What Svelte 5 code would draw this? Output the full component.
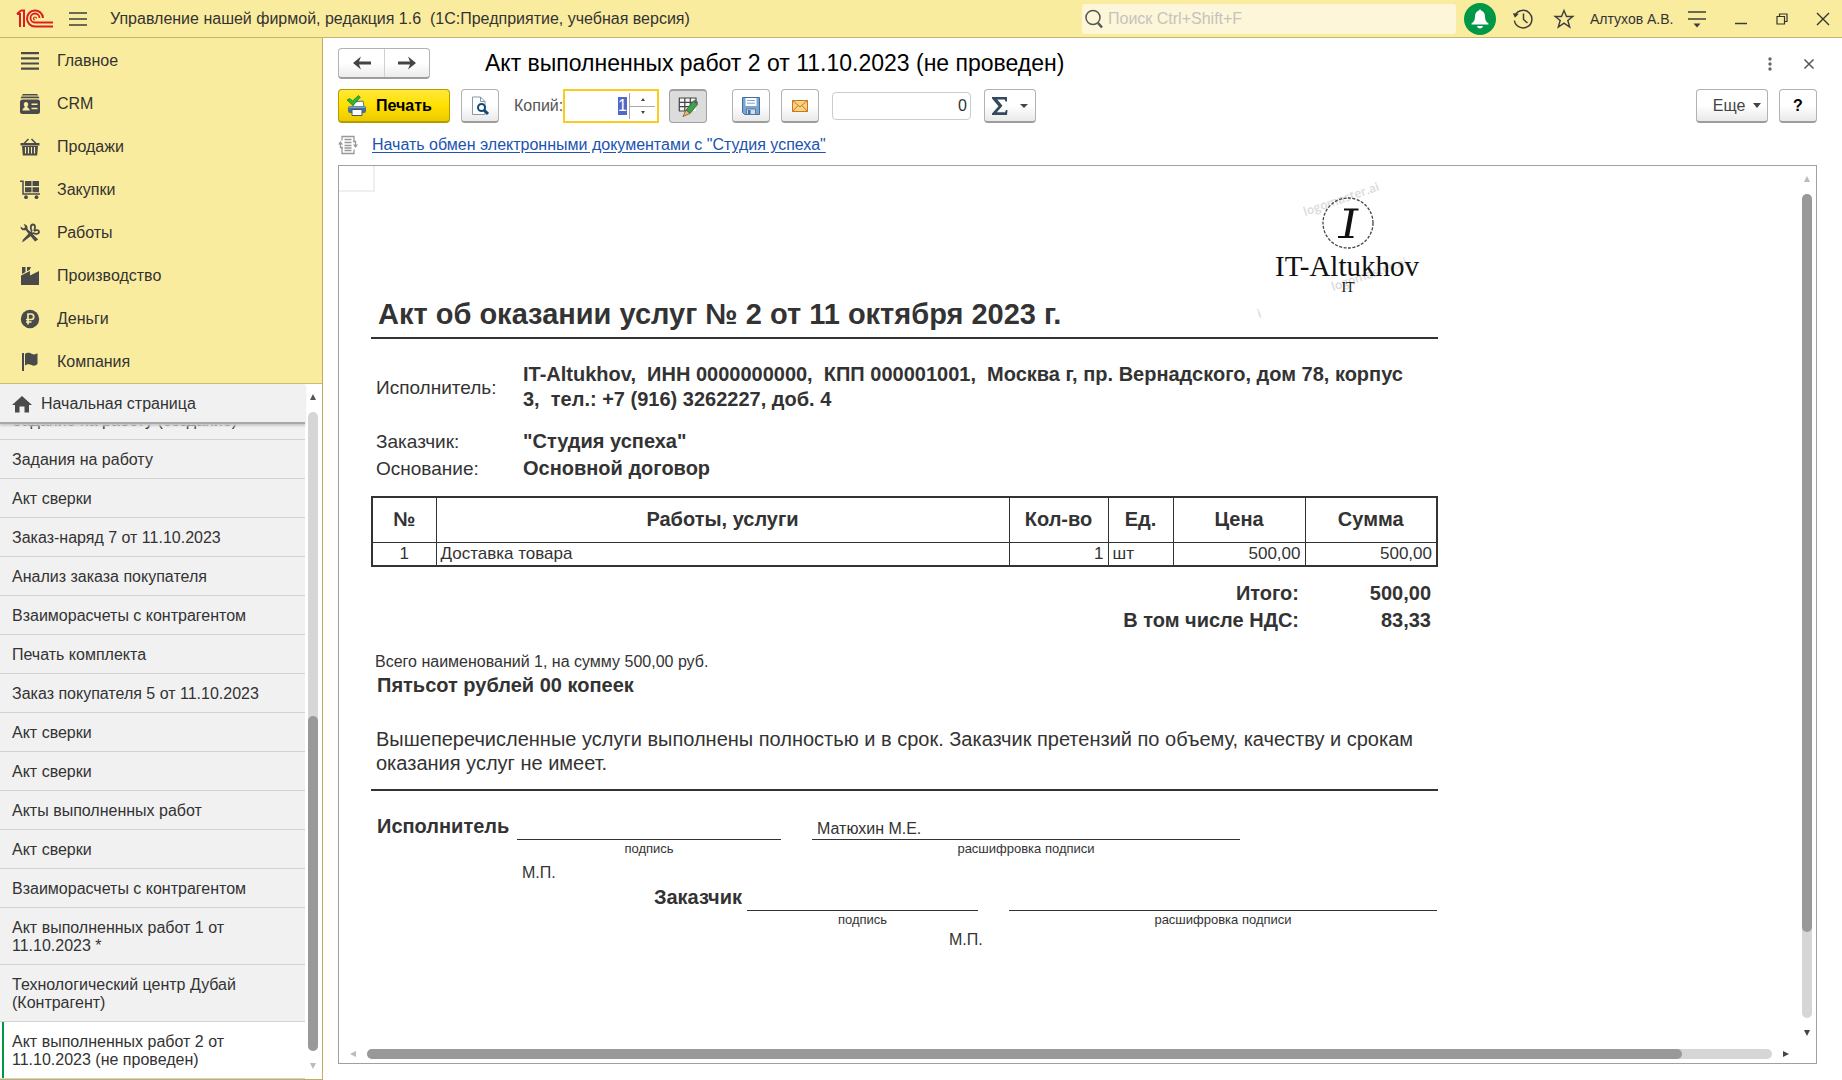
<script>
  import { onMount } from 'svelte';

  const sections = [
    { id: 'main', label: 'Главное' },
    { id: 'crm', label: 'CRM' },
    { id: 'sales', label: 'Продажи' },
    { id: 'purchases', label: 'Закупки' },
    { id: 'works', label: 'Работы' },
    { id: 'production', label: 'Производство' },
    { id: 'money', label: 'Деньги' },
    { id: 'company', label: 'Компания' }
  ];

  const tabs = [
    'Задание на работу (создание)',
    'Задания на работу',
    'Акт сверки',
    'Заказ-наряд 7 от 11.10.2023',
    'Анализ заказа покупателя',
    'Взаиморасчеты с контрагентом',
    'Печать комплекта',
    'Заказ покупателя 5 от 11.10.2023',
    'Акт сверки',
    'Акт сверки',
    'Акты выполненных работ',
    'Акт сверки',
    'Взаиморасчеты с контрагентом',
    'Акт выполненных работ 1 от 11.10.2023 *',
    'Технологический центр Дубай (Контрагент)',
    'Акт выполненных работ 2 от 11.10.2023 (не проведен)'
  ];

  let copies = $state('1');
  let cellSum = $state('0');
  let copiesInput;

  onMount(() => {
    copiesInput.focus({ preventScroll: true });
    copiesInput.select();
  });
</script>

<div class="app">
  <header class="topbar">
    <svg class="logo" viewBox="0 0 38 20" width="38" height="20" fill="none" stroke="#d9201f" stroke-width="2">
      <path d="M1 5h3v13M4 5h0M5 1.500h3v16.500M1 5l4-3.500" />
      <path d="M27 9a8 8 0 1 0-8 8.500h18" />
      <path d="M23.500 9a4.500 4.500 0 1 0-4.500 4.500h18" stroke-width="1.800" />
      <path d="M20.500 9.500a1.500 1.500 0 1 0-1.500 1.500" stroke-width="1.200" />
    </svg>
    <button class="plain menu" aria-label="Меню">
      <svg viewBox="0 0 20 16" width="20" height="16" stroke="#3c3c3c" stroke-width="1.500"><path d="M1 2h18M1 8h18M1 14h18" /></svg>
    </button>
    <span class="apptitle">Управление нашей фирмой, редакция 1.6&nbsp; (1С:Предприятие, учебная версия)</span>
    <label class="search">
      <svg viewBox="0 0 20 20" width="20" height="20" fill="none" stroke="#555"><circle cx="9" cy="8.500" r="7" stroke-width="1.500" /><path d="M14 14l4 4.500" stroke-width="2.500" /></svg>
      <input type="text" aria-label="Поиск" placeholder="Поиск Ctrl+Shift+F" />
    </label>
    <button class="bell" aria-label="Уведомления">
      <svg viewBox="0 0 20 20" width="20" height="20" fill="#fff"><path d="M10 0.500c.8 0 1.200.6 1.300 1.300 2.700.8 3.700 3 3.700 5.700 0 3.700 1.200 5.500 3.500 7v1h-17v-1c2.300-1.500 3.500-3.300 3.500-7 0-2.700 1-4.900 3.700-5.700.1-.7.5-1.300 1.300-1.300zM7 17h6c-.3 1.600-1.500 2.500-3 2.500s-2.700-.9-3-2.500z" /></svg>
    </button>
    <button class="plain hist" aria-label="История">
      <svg viewBox="0 0 22 22" width="22" height="22" fill="none" stroke="#3c3c3c" stroke-width="1.500"><path d="M3.300 7a8.800 8.800 0 1 1-.9 5.500M11.500 5.500v6l4 3.500" /><path d="M.8 5.200l6 .6-3.800 4z" fill="#3c3c3c" stroke="none" /></svg>
    </button>
    <button class="plain star" aria-label="Избранное">
      <svg viewBox="0 0 20 20" width="20" height="20" fill="none" stroke="#3c3c3c" stroke-width="1.400"><path d="M10 1.500l2.500 6h6.300l-5 4 1.900 6.500-5.700-3.900-5.700 3.900 1.900-6.500-5-4h6.300z" /></svg>
    </button>
    <span class="user">Алтухов А.В.</span>
    <button class="plain settings" aria-label="Настройки">
      <svg viewBox="0 0 18 18" width="18" height="18"><path d="M0 2h18M0 9h18" stroke="#3c3c3c" stroke-width="1.600" /><path d="M5.500 13.500h7l-3.500 4z" fill="#3c3c3c" /></svg>
    </button>
    <button class="plain win" aria-label="Свернуть"><svg viewBox="0 0 12 12" width="12" height="12" stroke="#3c3c3c" stroke-width="1.500"><path d="M0 10.500h12" /></svg></button>
    <button class="plain win" aria-label="Восстановить"><svg viewBox="0 0 12 12" width="12" height="12" fill="none" stroke="#333" stroke-width="1.200"><path d="M1 3.500h7.500v7.500h-7.500zM3.500 3.500v-2.500h7.500v7.500h-2.500" /></svg></button>
    <button class="plain win" aria-label="Закрыть"><svg viewBox="0 0 14 14" width="14" height="14" stroke="#333" stroke-width="1.400"><path d="M1 1l12 12M13 1l-12 12" /></svg></button>
  </header>

  <aside class="sidebar">
    <nav class="sections">
      {#each sections as s (s.id)}
        <a href="#{s.id}">
          <svg viewBox="0 0 20 20" width="20" height="20" fill="#4a4a4a">
            {#if s.id === 'main'}
              <path d="M1 1h18v2.200h-18zM1 6.200h18v2.200h-18zM1 11.400h18v2.200h-18zM1 16.600h18v2.200h-18z" />
            {:else if s.id === 'crm'}
              <path d="M3 0h14l1.500 1.500h-17zM1.500 2.500h17l1 1.800h-19z" />
              <rect x="0" y="5.500" width="20" height="14.500" rx="2.500" />
              <path d="M6 8c1.500 0 2.200 1 2.200 2.300 0 1.200-.5 2-1 2.500.2 1.500 2.500 1.200 2.500 3.700h-7.200c0-2.500 2.100-2.200 2.300-3.700-.5-.5-1-1.300-1-2.500 0-1.300.7-2.300 2.200-2.300zM11.500 9.500h6v1.500h-6zM11.500 13.800h6v1.500h-6z" fill="#f9eca0" />
            {:else if s.id === 'sales'}
              <path d="M4 6.500l4.500-4.500M16 6.500l-4.500-4.500" stroke="#4a4a4a" stroke-width="1.500" />
              <path d="M.5 6h19v2.500h-19zM2 9h16l-.8 9.500h-14.400z" />
              <path d="M5.500 10v6.500M8.500 10v6.500M11.500 10v6.500M14.500 10v6.500" stroke="#f9eca0" stroke-width="1.100" />
            {:else if s.id === 'purchases'}
              <path d="M0 1.200h3v12.800h17" fill="none" stroke="#4a4a4a" stroke-width="1.500" />
              <path d="M5 1h6.500v5h-6.500zM12.500 1h6.500v5h-6.500zM5 7.200h6.500v5h-6.500zM12.500 7.200h6.500v5h-6.500z" />
              <circle cx="6" cy="17.200" r="1.900" /><circle cx="16.500" cy="17.200" r="1.900" />
            {:else if s.id === 'works'}
              <path d="M.5 3.500c0 3.500 3 4.500 5 3.500l9.500 11.500 3.200-2-10.700-10.500c.6-2.500-1-4.800-3.800-4.700l1.500 2.700-1.500 1.500z" />
              <path d="M2 19.500l1-3 8-8.500 2.800 2.800-8.800 6.700z" />
              <path d="M12 8.500c-2-3-1.500-7 1-7s2.500 4 1 6.500M14 8c3-1.500 5-1 5 1s-3.500 2.500-6 .8" fill="none" stroke="#4a4a4a" stroke-width="1.800" />
            {:else if s.id === 'production'}
              <path d="M1 19v-9.500l9-4.500v4.500l9-4.500v14zM2 1h3.500v5l-3.500 2zM7 1h4l-1.500 3-2.500 1.300z" />
            {:else if s.id === 'money'}
              <circle cx="10" cy="10" r="9.200" />
              <path d="M8 15.500v-10.500h3a2.600 2.600 0 0 1 0 5.500h-5M6 13h5.500" fill="none" stroke="#f9eca0" stroke-width="1.700" />
            {:else}
              <path d="M2 1h2v18h-2zM5 2c3-2 5-1 7 0 2 .8 4 .3 5.500-.8v10.800c-2 2-4 2-6 1s-4-1.200-6.500.5z" />
            {/if}
          </svg>
          <span>{s.label}</span>
        </a>
      {/each}
    </nav>
    <div class="open">
      <div class="tabs">
        <a class="home" href="#home">
          <svg viewBox="0 0 20 18" width="20" height="18" fill="#4a4a4a"><path d="M10 1l10 9h-3v7.500h-4.500v-6h-5v6h-4.500v-7.500h-3z" /></svg>
          <span>Начальная страница</span>
        </a>
        <div class="list">
          {#each tabs as t, i}
            <a href="#tab{i}" class:active={i === tabs.length - 1}><span>{t}</span></a>
          {/each}
        </div>
      </div>
      <div class="vbar side">
        <svg class="arrow" viewBox="0 0 6 6" width="6" height="6" fill="#555"><path d="M0 6l3-6 3 6z" /></svg>
        <div class="track"><div class="thumb low"></div></div>
        <svg class="arrow" viewBox="0 0 6 6" width="6" height="6" fill="#bbb"><path d="M0 0h6l-3 6z" /></svg>
      </div>
    </div>
  </aside>

  <main>
    <div class="titlebar">
      <div class="nav">
        <button aria-label="Назад"><svg viewBox="0 0 18 14" width="18" height="14" fill="#444"><path d="M0 7l8-6.500-2 5h12v3h-12l2 5z" /></svg></button>
        <button aria-label="Вперед"><svg viewBox="0 0 18 14" width="18" height="14" fill="#444"><path d="M18 7l-8-6.500 2 5h-12v3h12l-2 5z" /></svg></button>
      </div>
      <h1>Акт выполненных работ 2 от 11.10.2023 (не проведен)</h1>
      <button class="plain more" aria-label="Действия"><svg viewBox="0 0 4 14" width="4" height="14" fill="#666"><circle cx="2" cy="2" r="1.700" /><circle cx="2" cy="7" r="1.700" /><circle cx="2" cy="12" r="1.700" /></svg></button>
      <button class="plain" aria-label="Закрыть документ"><svg viewBox="0 0 10 10" width="10" height="10" stroke="#555" stroke-width="1.500"><path d="M.5.5l9 9M9.500.5l-9 9" /></svg></button>
    </div>

    <div class="toolbar">
      <button class="btn print">
        <svg viewBox="0 0 20 20" width="20" height="20">
          <path d="M7 6l9-1 1 6h-11z" fill="#fff" stroke="#54708f" stroke-width="1" />
          <rect x="1" y="10" width="18" height="7" rx="2" fill="#4a7096" /><path d="M2 10.500h16v1.500h-16z" fill="#7fa3c4" />
          <path d="M5 13.500h10v6h-10z" fill="#fff" stroke="#3c5a78" stroke-width="1" />
          <path d="M0 4l3-1.500 2.500 2.500 6-5.500 1.800 1.800-7.300 8.200z" fill="#35b535" stroke="#16801e" stroke-width=".8" />
        </svg>
        <span>Печать</span>
      </button>
      <button class="btn sq preview" aria-label="Просмотр">
        <svg viewBox="0 0 18 20" width="18" height="20" fill="none"><path d="M1.500 1h8l4.500 4.500v13h-12.500z" fill="#fff" stroke="#8597a8" stroke-width="1" /><path d="M9.500 1v4.500h4.500" stroke="#8597a8" /><circle cx="10.500" cy="11.500" r="3.500" fill="#fff" stroke="#0f4b78" stroke-width="2" /><path d="M13 14l4 4" stroke="#0f4b78" stroke-width="3" /></svg>
      </button>
      <label class="lbl" for="copies">Копий:</label>
      <div class="spin">
        <input id="copies" type="text" bind:value={copies} bind:this={copiesInput} />
        <div class="steps">
          <button aria-label="Больше" onclick={() => (copies = String(+copies + 1))}><svg viewBox="0 0 4 3" width="4" height="3" fill="#444"><path d="M0 3l2-3 2 3z" /></svg></button>
          <button aria-label="Меньше" onclick={() => (copies = String(Math.max(1, +copies - 1)))}><svg viewBox="0 0 4 3" width="4" height="3" fill="#444"><path d="M0 0h4l-2 3z" /></svg></button>
        </div>
      </div>
      <button class="btn sq pressed" aria-label="Редактирование">
        <svg viewBox="0 0 20 20" width="20" height="20" fill="none"><path d="M1 1h17v13h-17z" fill="#f4f4f4" /><path d="M.8 1h17.700M.8 5.300h17.700M.8 9.600h15M.8 14h9M1.300 1v13M6.800 1v13M12.300 1v9M18 1v5" stroke="#444" stroke-width="1.200" /><path d="M8 13l7.500-9 4 3.500-7.500 9z" fill="#3da04a" stroke="#1f6b33" stroke-width=".8" /><path d="M8 13l4 3.500-7 3z" fill="#e8b878" stroke="#6a4a24" stroke-width=".7" /><path d="M15.500 4l1.500-1.200 3 2.500-.5 2.200z" fill="#5c5c5c" /></svg>
      </button>
      <button class="btn sq save" aria-label="Сохранить">
        <svg viewBox="0 0 18 18" width="18" height="18"><path d="M.5.5h17v17h-15l-2-2z" fill="#7ba6cf" stroke="#406f9f" /><path d="M3.500 1h11v8h-11z" fill="#fff" /><path d="M5 3.500h8M5 6.200h8" stroke="#7ba6cf" /><path d="M4.500 12h9v5.500h-9z" fill="#d6dde4" stroke="#406f9f" stroke-width=".8" /><path d="M6 13h2.500v4h-2.500z" fill="#406f9f" /></svg>
      </button>
      <button class="btn sq" aria-label="Отправить">
        <svg viewBox="0 0 16 12" width="16" height="12" fill="none" stroke="#c5791b" stroke-width="1"><path d="M.5.5h15v11h-15z" fill="#fcd184" /><path d="M.5.5l7.500 6.500 7.500-6.500M.5 11.500l5.500-6M15.500 11.500l-5.500-6" /></svg>
      </button>
      <input class="sum" type="text" aria-label="Сумма ячеек" bind:value={cellSum} />
      <button class="btn sigma" aria-label="Функция">
        <svg viewBox="0 0 16 18" width="16" height="18" fill="#34495e"><path d="M0 0h15v4.500h-1.500l-.8-2h-7.400l5.200 6.300-5.700 6.500h8.200l1-2.300h1.500l-.5 5h-15v-1.500l6.500-7.300-6.500-7.700z" /></svg>
        <svg viewBox="0 0 8 4" width="8" height="4" fill="#444"><path d="M0 0h8l-4 4z" /></svg>
      </button>
      <button class="btn else">Еще<svg viewBox="0 0 8 5" width="8" height="5" fill="#444"><path d="M0 0h8l-4 5z" /></svg></button>
      <button class="btn sq help">?</button>
    </div>

    <div class="edi">
      <svg viewBox="0 0 20 20" width="20" height="20" fill="none" stroke="#999" stroke-width="1.300"><path d="M4 5.500v-4h12v5M4 13v5.500h12v-4M6.500 4.500h7M6.500 7.500h7M6.500 10.500h7M6.500 13h7M6.500 15.500h7" /><path d="M0 9.500l2.500-3.500 2.500 3.500zM15 9.500h5l-2.500 3.500z" fill="#999" stroke="none" /><path d="M2.500 9v3.500h2.500M17.500 10v-3.500h-2.500" /></svg>
      <a href="#edi">Начать обмен электронными документами с "Студия успеха"</a>
    </div>

    <section class="viewer">
      <div class="canvas">
        <div class="cell"></div>
        <article class="sheet">
          <svg class="brand" viewBox="0 0 180 132" width="180" height="132">
            <g class="mark">
              <text transform="translate(55 50) rotate(-19)">logomaster.ai</text>
              <text transform="translate(83 125) rotate(-19)">logomaster.ai</text>
              <text transform="translate(9 152) rotate(-19)">i</text>
            </g>
            <circle cx="98" cy="57" r="25" fill="none" stroke="#444" stroke-width="1.300" stroke-dasharray="3 1.500" />
            <path d="M94 43.500h14.500M88 71h15.500" stroke="#111" stroke-width="2.200" />
            <path d="M99.500 43l4.500 0-5 28-4.500 0z" fill="#111" />
            <text class="bname" x="97" y="110">IT-Altukhov</text>
            <text class="bsub" x="98" y="126">IT</text>
          </svg>
          <h2>Акт об оказании услуг № 2 от 11 октября 2023 г.</h2>
          <dl class="parties">
            <dt>Исполнитель:</dt>
            <dd>IT-Altukhov,&nbsp; ИНН 0000000000,&nbsp; КПП 000001001,&nbsp; Москва г, пр. Вернадского, дом 78, корпус 3,&nbsp; тел.: +7 (916) 3262227, доб. 4</dd>
            <dt class="first">Заказчик:</dt>
            <dd class="first">"Студия успеха"</dd>
            <dt>Основание:</dt>
            <dd>Основной договор</dd>
          </dl>
          <table>
            <colgroup><col class="c1" /><col /><col class="c3" /><col class="c4" /><col class="c5" /><col class="c5" /></colgroup>
            <thead><tr><th>№</th><th>Работы, услуги</th><th>Кол-во</th><th>Ед.</th><th>Цена</th><th>Сумма</th></tr></thead>
            <tbody><tr><td class="mid">1</td><td>Доставка товара</td><td class="num">1</td><td>шт</td><td class="num">500,00</td><td class="num">500,00</td></tr></tbody>
          </table>
          <dl class="totals">
            <dt>Итого:</dt><dd>500,00</dd>
            <dt>В том числе НДС:</dt><dd>83,33</dd>
          </dl>
          <p class="count">Всего наименований 1, на сумму 500,00 руб.</p>
          <p class="words">Пятьсот рублей 00 копеек</p>
          <p class="claim">Вышеперечисленные услуги выполнены полностью и в срок. Заказчик претензий по объему, качеству и срокам оказания услуг не имеет.</p>
          <div class="sign">
            <b>Исполнитель</b><span class="line"></span><span></span><span class="line">Матюхин М.Е.</span>
            <span></span><small>подпись</small><span></span><small>расшифровка подписи</small>
            <span></span><span class="stamp">М.П.</span>
          </div>
          <div class="sign client">
            <b>Заказчик</b><span class="line"></span><span></span><span class="line"></span>
            <span></span><small>подпись</small><span></span><small>расшифровка подписи</small>
            <span></span><span class="stamp">М.П.</span>
          </div>
        </article>
      </div>
      <div class="vbar">
        <svg class="arrow" viewBox="0 0 6 6" width="6" height="6" fill="#bbb"><path d="M0 6l3-6 3 6z" /></svg>
        <div class="track"><div class="thumb high"></div></div>
        <svg class="arrow" viewBox="0 0 6 6" width="6" height="6" fill="#444"><path d="M0 0h6l-3 6z" /></svg>
      </div>
      <div class="hbar">
        <svg class="arrow" viewBox="0 0 6 6" width="6" height="6" fill="#bbb"><path d="M6 0v6l-6-3z" /></svg>
        <div class="track"><div class="thumb wide"></div></div>
        <svg class="arrow" viewBox="0 0 6 6" width="6" height="6" fill="#444"><path d="M0 0v6l6-3z" /></svg>
      </div>
    </section>
  </main>
</div>

<style>
  :global(body) { margin: 0; }
  .app {
    display: grid;
    grid-template: 38px minmax(0, 1fr) / 323px minmax(0, 1fr);
    height: 100vh;
    background: #fff;
    color: #333;
    font: 16px/18px "Liberation Sans", Arial, sans-serif;
  }
  .app *, .app { box-sizing: border-box; }
  button, input { font: inherit; color: inherit; margin: 0; }
  button { cursor: pointer; padding: 0; display: flex; align-items: center; justify-content: center; }
  a { color: inherit; text-decoration: none; }
  svg { display: block; flex: none; overflow: visible; }
  h1, h2, p, dl, dd { margin: 0; }
  .plain { background: none; border: 0; }

  .topbar {
    grid-column: 1 / -1;
    display: flex;
    align-items: center;
    background: #faec9e;
    border-bottom: 1px solid #c8b568;
    padding: 0 12px 0 16px;
  }
  .menu { margin: 0 22px 0 14px; }
  .apptitle { flex: 1; white-space: nowrap; }
  .search { display: flex; align-items: center; width: 374px; height: 30px; padding: 0 4px 0 2px; background: #fdf6d8; border-radius: 3px; }
  .search input { flex: 1; min-width: 0; border: 0; outline: 0; background: none; padding: 0 4px; }
  .search input::placeholder { color: #c4c3bd; opacity: 1; }
  .bell { width: 32px; height: 32px; border: 0; border-radius: 50%; background: #009846; margin-left: 8px; }
  .hist { margin-left: 16px; }
  .star { margin-left: 20px; }
  .user { margin-left: 16px; font-size: 14px; width: 82px; white-space: nowrap; }
  .settings { margin-left: 16px; }
  .win { margin-left: 29px; }
  .win:last-child { margin-left: 28px; }

  .sidebar { display: flex; flex-direction: column; min-height: 0; border-right: 1px solid #c3ae60; border-bottom: 1px solid #c3ae60; }
  .sections { background: #faec9e; border-bottom: 1px solid #c8bb74; padding-top: 1px; }
  .sections a { display: flex; align-items: center; gap: 17px; height: 43px; padding-left: 20px; }
  .open { flex: 1; min-height: 0; display: flex; }
  .tabs { flex: 1; display: flex; flex-direction: column; min-width: 0; background: #f1f1f1; }
  .home { position: relative; display: flex; align-items: center; gap: 9px; height: 40px; flex: none; padding: 2px 0 0 12px; border-bottom: 2px solid #a8a8a8; box-shadow: 0 2px 2px #ccc; }
  .list { flex: 1; min-height: 0; overflow: hidden; display: flex; flex-direction: column; justify-content: flex-end; }
  .list a { flex: none; padding: 11px 40px 9px 12px; border-bottom: 1px solid #d3d3d3; }
  .list .active { background: #fff; box-shadow: inset 2px 0 #fff, inset 4px 0 #009846; }

  .vbar { display: flex; flex-direction: column; align-items: center; gap: 12px; width: 14px; padding: 10px 4px 13px 0; }
  .side { width: 17px; padding: 10px 4px 10px 3px; }
  .vbar .track { width: 10px; flex: 1; }
  .track { background: #d6d6d6; border-radius: 5px; display: flex; }
  .thumb { background: #999; border-radius: 5px; flex: none; width: 100%; }
  .low { height: 52.5%; margin-top: auto; }
  .vbar .track { flex-direction: column; }
  .high { height: 89.600%; }

  main { display: flex; flex-direction: column; min-width: 0; padding: 10px 25px 16px 15px; }
  .titlebar { display: flex; align-items: center; height: 31px; }
  .nav { display: flex; border: 1px solid #b2b2b2; border-bottom: 2px solid #9d9d9d; border-radius: 4px; background: linear-gradient(#fff 50%, #ececec); }
  .nav button { width: 45px; height: 28px; border: 0; background: none; }
  .nav button + button { border-left: 1px solid #d0d0d0; }
  h1 { flex: 1; margin-left: 55px; padding-bottom: 2px; font: 23px/28px "Liberation Sans", Arial, sans-serif; color: #000; white-space: nowrap; }
  .more { margin-right: 32px; }
  .titlebar .plain:last-child { margin-right: 3px; }

  .toolbar { display: flex; align-items: center; height: 34px; margin-top: 10px; }
  .btn { height: 34px; border: 1px solid #b2b2b2; border-bottom: 2px solid #9d9d9d; border-radius: 4px; background: linear-gradient(#fff 50%, #e9e9e9); color: #444; }
  .sq { width: 38px; }
  .print { width: 112px; gap: 9px; justify-content: flex-start; padding-left: 8px; font-weight: bold; color: #000; border-color: #b39b00; background: linear-gradient(#ffe83a, #ffe000 50%, #ecca00); }
  .preview { margin-left: 11px; }
  .lbl { margin: 0 4px 0 15px; color: #555; width: 45px; white-space: nowrap; }
  .spin { display: flex; width: 96px; height: 34px; margin-right: 10px; border: 2px solid #fbcb20; background: #fff; padding: 2px; }
  .spin input { flex: 1; min-width: 0; border: 0; outline: 0; padding: 0 2px; text-align: right; }
  .spin input::selection { background: #4f69c6; color: #fff; }
  .steps { width: 26px; display: flex; flex-direction: column; border-left: 1px solid #aaa; }
  .steps button { flex: 1; border: 0; background: none; }
  .steps button + button { border-top: 1px solid #aaa; }
  .pressed { background: #dcdcdc; border: 1px solid #a0a0a0; border-top: 2px solid #a0a0a0; }
  .save { margin: 0 11px 0 25px; }
  .sum { width: 139px; height: 28px; margin: 0 13px; border: 1px solid #ccc; border-radius: 4px; text-align: right; padding: 0 3px; outline: 0; }
  .sigma { width: 52px; gap: 12px; }
  .else { width: 72px; gap: 8px; margin-left: auto; padding-left: 10px; }
  .help { margin-left: 11px; color: #000; font-weight: bold; }

  .edi { display: flex; align-items: center; gap: 14px; height: 20px; margin: 12px 0 10px; }
  .edi a { color: #2053b0; text-decoration: underline; text-underline-offset: 2px; }

  .viewer { flex: 1; min-height: 0; display: grid; grid-template: minmax(0, 1fr) 14px / minmax(0, 1fr) 14px; border: 1px solid #a0a0a0; }
  .canvas { overflow: hidden; position: relative; }
  .cell { position: absolute; width: 36px; height: 26px; border: solid #efefef; border-width: 0 2px 2px 0; }
  .hbar { display: flex; align-items: center; gap: 11px; padding: 0 13px 4px 11px; }
  .hbar .track { flex: 1; height: 10px; }
  .wide { width: 93.600%; }

  .sheet { width: 1067px; margin-left: 32px; font-size: 20px; line-height: 25px; }
  .brand { margin: 0 8px 0 auto; }
  .brand text { fill: #111; }
  .brand .mark text { font: 600 12px "Open Sans", sans-serif; fill: #dadada; }
  .brand .bname { font: 29px "Liberation Serif", serif; text-anchor: middle; }
  .brand .bsub { font: 14px "Liberation Serif", serif; text-anchor: middle; }
  h2 { font-size: 29px; line-height: 32px; padding: 0 0 7px 7px; border-bottom: 2px solid #333; }
  .parties { display: grid; grid-template-columns: 147px 1fr; align-items: center; margin: 23px 0 14px; padding-left: 5px; }
  .parties dt { font-size: 19px; }
  .parties dd { font-weight: bold; padding-right: 20px; }
  .parties .first { margin-top: 16px; }
  .parties .first, .parties .first ~ dt, .parties .first ~ dd { line-height: 27px; }
  table { width: 100%; table-layout: fixed; border-collapse: collapse; border: 2px solid #333; }
  .c1 { width: 64px; }
  .c3 { width: 99px; }
  .c4 { width: 65px; }
  .c5 { width: 132px; }
  th, td { border: 1px solid #333; padding: 0 4px; }
  th { height: 45px; }
  td { height: 23px; font-size: 17px; line-height: 22px; }
  .mid { text-align: center; }
  .num { text-align: right; }
  .totals { display: grid; grid-template-columns: 1fr 132px; margin-top: 13px; padding-right: 7px; line-height: 27px; text-align: right; font-weight: bold; }
  .count { margin-top: 17px; padding-left: 4px; font-size: 16px; line-height: 22px; }
  .words { padding-left: 6px; font-weight: bold; }
  .claim { margin-top: 29px; padding: 0 20px 14px 5px; line-height: 24px; border-bottom: 2px solid #333; }
  .sign { display: grid; grid-template-columns: 146px 264px 31px 428px; margin-top: 23px; }
  .sign b { padding-left: 6px; }
  .sign .line { height: 26px; border-bottom: 1px solid #333; padding-left: 5px; font-size: 16px; line-height: 29px; }
  .sign small { font-size: 13px; line-height: 17px; text-align: center; }
  .stamp { padding: 6px 0 0 5px; font-size: 16px; line-height: 20px; }
  .client { grid-template-columns: 376px 231px 31px 428px; margin-top: 2px; }
  .client b { text-align: right; padding-right: 5px; }
  .client .stamp { padding: 2px 0 0; margin-left: 202px; }
</style>
